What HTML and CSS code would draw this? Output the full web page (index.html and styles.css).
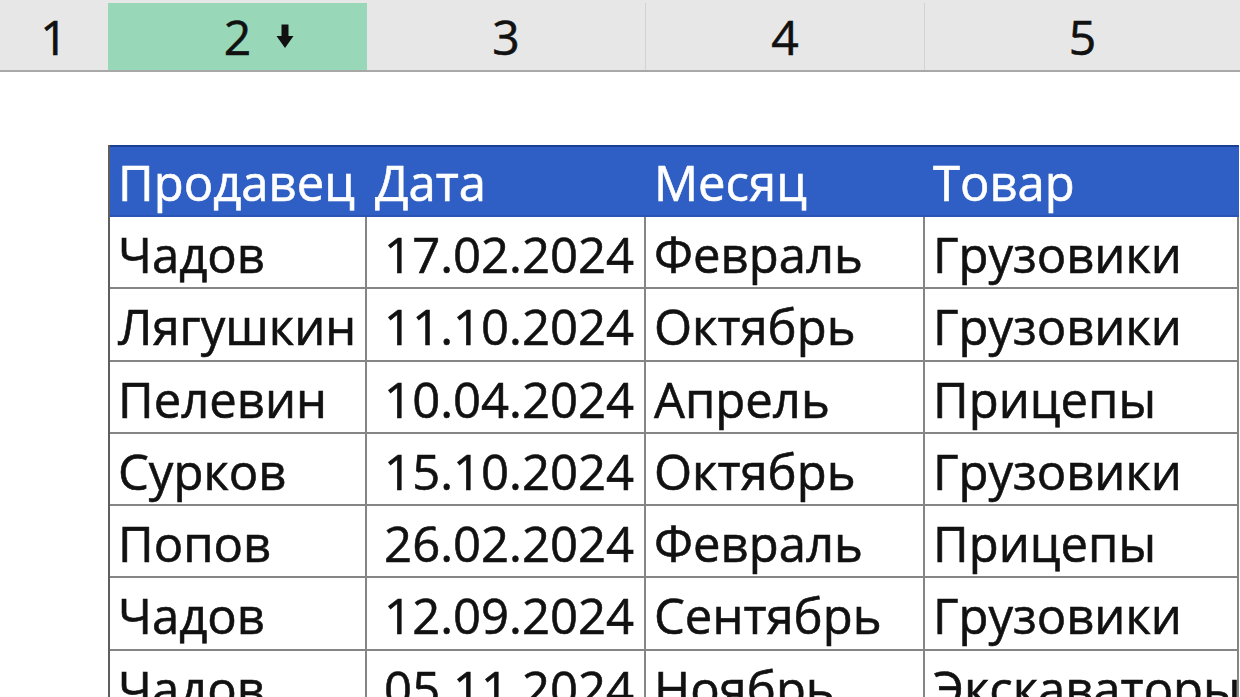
FILE: index.html
```html
<!DOCTYPE html>
<html lang="ru">
<head>
<meta charset="utf-8">
<link rel="stylesheet" href="styles.css">
</head>
<body>
<div class="colbar">
  <div class="ch w0">1</div>
  <div class="ch w1 sel"><span>2</span>
    <svg class="sort" width="18" height="25" viewBox="0 0 18 25"><path d="M5.5 0.5 H12.5 V12 H17.5 L9 24 L0.5 12 H5.5 Z" fill="#111"/></svg>
  </div>
  <div class="ch w2">3</div>
  <div class="ch w3">4</div>
  <div class="ch w4">5</div>
</div>
<div class="sheet">
  <div class="tbl">
    <div class="row head">
      <div class="cell">Продавец</div>
      <div class="cell">Дата</div>
      <div class="cell">Месяц</div>
      <div class="cell">Товар</div>
    </div>
    <div class="row">
      <div class="cell">Чадов</div><div class="cell num">17.02.2024</div><div class="cell">Февраль</div><div class="cell">Грузовики</div>
    </div>
    <div class="row">
      <div class="cell">Лягушкин</div><div class="cell num">11.10.2024</div><div class="cell">Октябрь</div><div class="cell">Грузовики</div>
    </div>
    <div class="row">
      <div class="cell">Пелевин</div><div class="cell num">10.04.2024</div><div class="cell">Апрель</div><div class="cell">Прицепы</div>
    </div>
    <div class="row">
      <div class="cell">Сурков</div><div class="cell num">15.10.2024</div><div class="cell">Октябрь</div><div class="cell">Грузовики</div>
    </div>
    <div class="row">
      <div class="cell">Попов</div><div class="cell num">26.02.2024</div><div class="cell">Февраль</div><div class="cell">Прицепы</div>
    </div>
    <div class="row">
      <div class="cell">Чадов</div><div class="cell num">12.09.2024</div><div class="cell">Сентябрь</div><div class="cell">Грузовики</div>
    </div>
    <div class="row">
      <div class="cell">Чадов</div><div class="cell num">05.11.2024</div><div class="cell">Ноябрь</div><div class="cell">Экскаваторы</div>
    </div>
  </div>
</div>
</body>
</html>
```

FILE: styles.css
```css
* { box-sizing: border-box; }
html, body {
  margin: 0;
  padding: 0;
  background: #ffffff;
  overflow: hidden;
  width: 1240px;
  height: 697px;
  font-family: "Open Sans", "Noto Sans", sans-serif;
  color: #111111;
}
.colbar {
  display: flex;
  height: 72px;
  background: #e7e7e7;
  border-bottom: 2px solid #a8a8a8;
  padding-top: 3px;
}
.ch {
  position: relative;
  display: flex;
  justify-content: center;
  align-items: flex-start;
  font-size: 48px;
  line-height: 67px;
  height: 67px;
  border-right: 1px solid #d2d2d2;
  -webkit-text-stroke: 0.6px #111111;
}
.w0 { width: 108px; border-right: none; }
.w1 { width: 259px; }
.w2 { width: 279px; }
.w3 { width: 279px; }
.w4 { width: 315px; border-right: none; }
.sel {
  background: #98d8b8;
  border-right: none;
}
.sort {
  position: absolute;
  left: 168px;
  top: 21px;
  display: block;
  flex: none;
}
.sheet {
  padding: 73px 0 0 108px;
}
.tbl {
  width: 1131px;
  border-left: 2px solid #5e5e5e;
}
.row {
  display: grid;
  grid-template-columns: 257px 279px 279px 314px;
  height: 72.3px;
}
.cell {
  font-size: 49px;
  line-height: 66px;
  padding: 4px 8px 0 8px;
  border-right: 2px solid #858585;
  border-bottom: 2px solid #858585;
  white-space: nowrap;
  overflow: hidden;
  -webkit-text-stroke: 0.6px #111111;
}
.num {
  text-align: right;
  padding-right: 10px;
}
.head {
  background: #2f5ec4;
  border-top: 2px solid #1c3f92;
  height: 72px;
}
.head .cell {
  color: #ffffff;
  -webkit-text-stroke: 0.6px #ffffff;
  border-right: none;
  border-bottom: 2px solid #2a55b4;
  padding-top: 2px;
}
```
